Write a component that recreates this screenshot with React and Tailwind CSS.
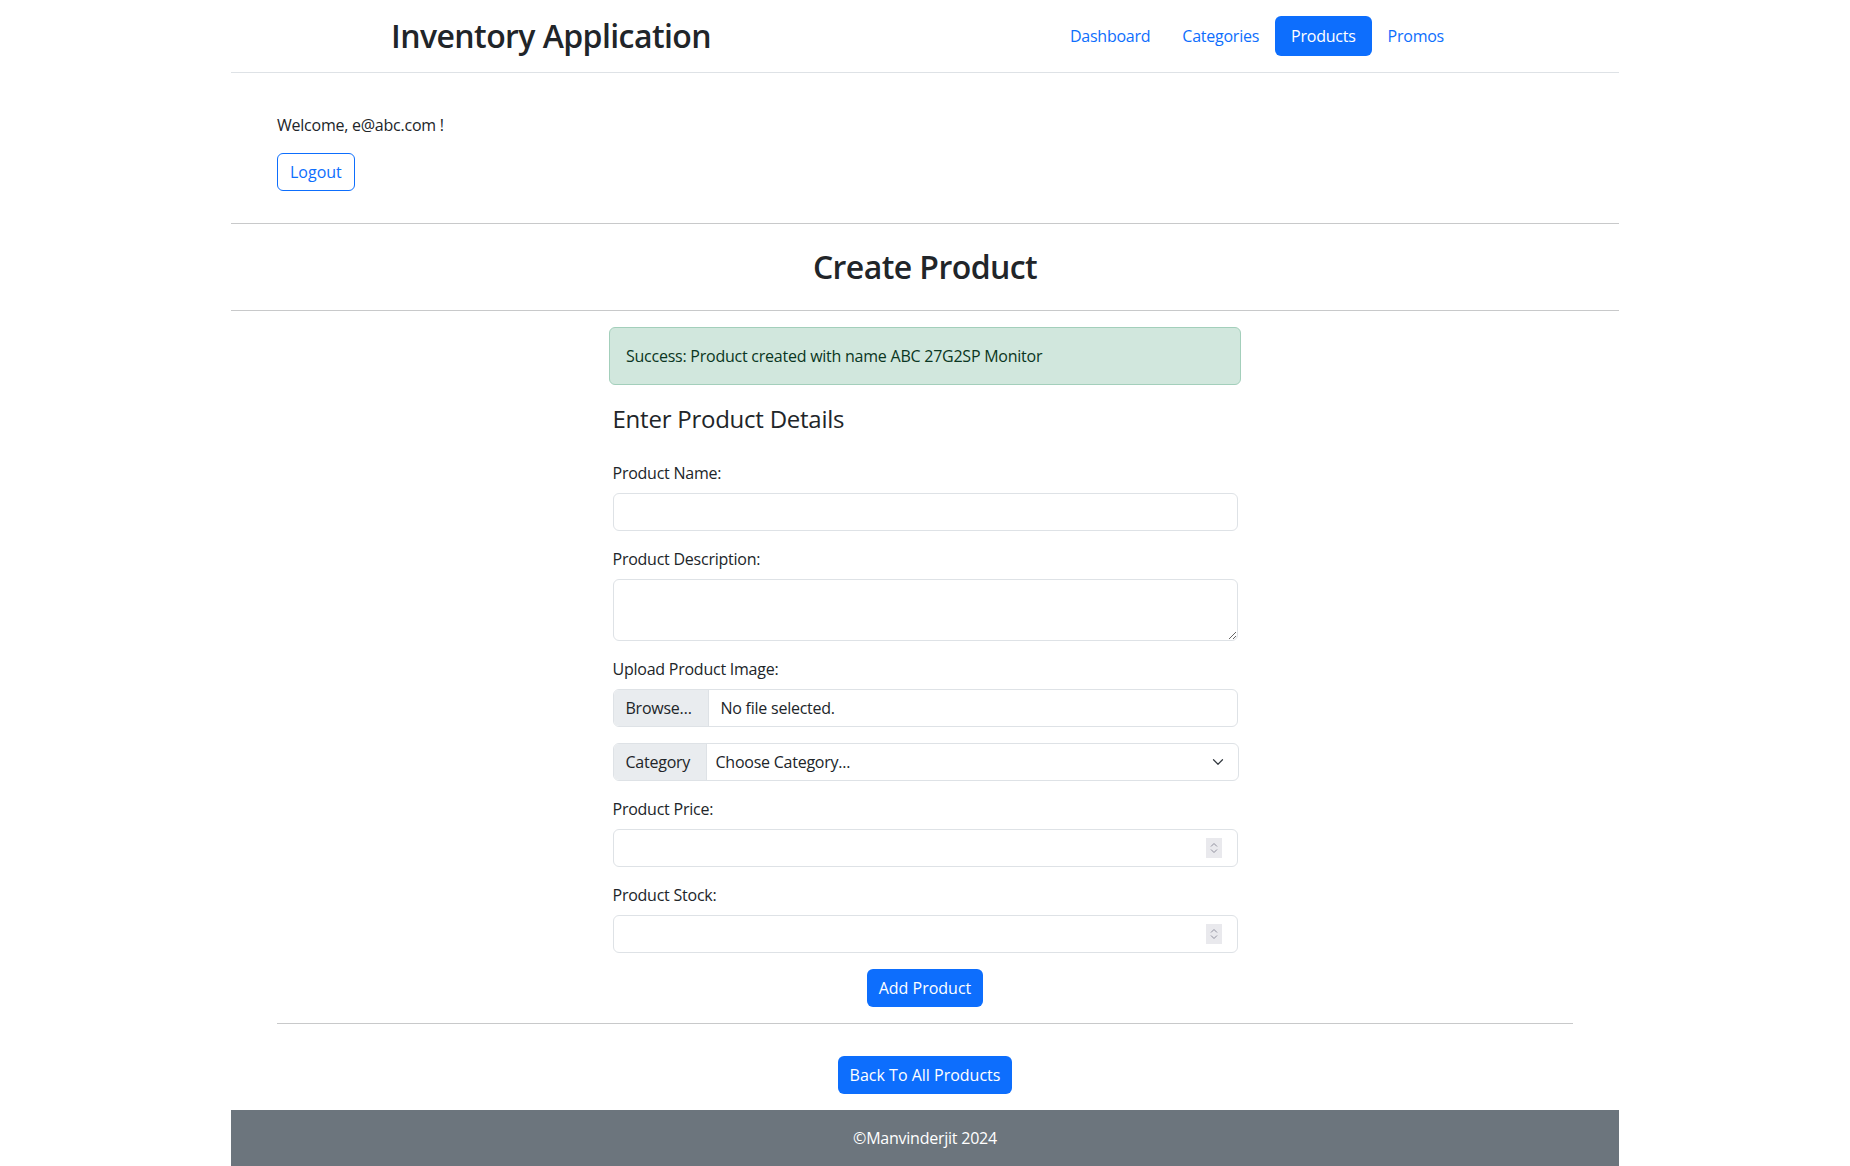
import React from 'react'

const navLinks = ['Dashboard', 'Categories', 'Products', 'Promos']

const Spinner = () => (
  <div className="absolute right-[15px] top-1/2 -translate-y-1/2 w-[16px] h-[20px] bg-[#e9e9ed] flex flex-col items-center justify-center gap-[2px]">
    <svg width="8" height="5" viewBox="0 0 8 5" fill="none">
      <path d="M1 4.5 4 1.5 7 4.5" stroke="#8f8f9d" strokeWidth="1" />
    </svg>
    <svg width="8" height="5" viewBox="0 0 8 5" fill="none">
      <path d="M1 .5 4 3.5 7 .5" stroke="#8f8f9d" strokeWidth="1" />
    </svg>
  </div>
)

const Field = ({ label, children }) => (
  <div className="mb-4">
    <div className="leading-6 mb-2">{label}</div>
    {children}
  </div>
)

export default function App() {
  return (
    <div className="w-[1388px] mx-auto bg-white text-[#212529] text-base tracking-[-0.015em] font-['Open_Sans',sans-serif]">
      {/* Header */}
      <header className="h-[73px] border-b border-[#dee2e6] flex items-center justify-between pl-[160px] pr-[159px]">
        <h1 className="text-[32px] font-semibold leading-[38px] tracking-[-0.018em]">Inventory Application</h1>
        <nav className="flex items-center">
          {navLinks.map(link => (
            <a
              key={link}
              href="#"
              className={`px-4 py-2 leading-6 rounded-md ${
                link === 'Products' ? 'bg-[#0d6efd] text-white' : 'text-[#0d6efd]'
              }`}
            >
              {link}
            </a>
          ))}
        </nav>
      </header>

      {/* Welcome */}
      <div className="px-[46px] pt-[40px] pb-[32px]">
        <p className="leading-6">Welcome, e@abc.com !</p>
        <button className="mt-4 h-[38px] px-3 border border-[#0d6efd] text-[#0d6efd] rounded-md leading-6 tracking-normal">
          Logout
        </button>
      </div>

      {/* Title */}
      <div className="border-t border-b border-[#c8c9ca] pt-[24px] pb-[24px]">
        <h2 className="text-center text-[32px] font-semibold leading-[38px] tracking-[-0.018em]">Create Product</h2>
      </div>

      {/* Alert */}
      <div className="w-[632px] mx-auto mt-4 p-4 leading-6 bg-[#d1e7dd] border border-[#a3cfbb] text-[#0a3622] rounded-md">
        Success: Product created with name ABC 27G2SP Monitor
      </div>

      {/* Form */}
      <form className="w-[625px] mx-auto">
        <h4 className="text-[24px] leading-[29px] mt-[19px] mb-[28px]">Enter Product Details</h4>

        <Field label="Product Name:">
          <input type="text" className="block w-full h-[38px] px-3 border border-[#dee2e6] rounded-md outline-none" />
        </Field>

        <Field label="Product Description:">
          <textarea rows={2} className="block w-full h-[62px] px-3 py-1.5 border border-[#dee2e6] rounded-md outline-none" />
        </Field>

        <Field label="Upload Product Image:">
          <div className="flex h-[38px] border border-[#dee2e6] rounded-md overflow-hidden">
            <div className="w-[95px] bg-[#e9ecef] border-r border-[#dee2e6] flex items-center px-3">Browse…</div>
            <div className="flex items-center px-3">No file selected.</div>
          </div>
        </Field>

        <div className="mb-4 flex h-[38px] w-[626px] border border-[#dee2e6] rounded-md overflow-hidden">
          <div className="w-[93px] bg-[#e9ecef] border-r border-[#dee2e6] flex items-center px-3">Category</div>
          <div className="flex-1 flex items-center justify-between pl-[9px] pr-[12px]">
            <span>Choose Category...</span>
            <svg width="16" height="12" viewBox="0 0 16 16" fill="none">
              <path d="m2 5 6 6 6-6" stroke="#343a40" strokeWidth="1.6" strokeLinecap="round" strokeLinejoin="round" />
            </svg>
          </div>
        </div>

        <Field label="Product Price:">
          <div className="relative h-[38px] border border-[#dee2e6] rounded-md">
            <Spinner />
          </div>
        </Field>

        <Field label="Product Stock:">
          <div className="relative h-[38px] border border-[#dee2e6] rounded-md">
            <Spinner />
          </div>
        </Field>

        <div className="flex justify-center pb-4">
          <button type="button" className="h-[38px] px-3 bg-[#0d6efd] text-white rounded-md leading-6 tracking-normal">
            Add Product
          </button>
        </div>
      </form>

      <div className="mx-[46px] border-t border-[#c8c9ca]" />

      <div className="flex justify-center pt-[32px] pb-4">
        <button className="h-[38px] px-3 bg-[#0d6efd] text-white rounded-md leading-6 tracking-normal">Back To All Products</button>
      </div>

      {/* Footer */}
      <footer className="bg-[#6c757d] text-white text-center py-4 leading-6">©Manvinderjit 2024</footer>
    </div>
  )
}
